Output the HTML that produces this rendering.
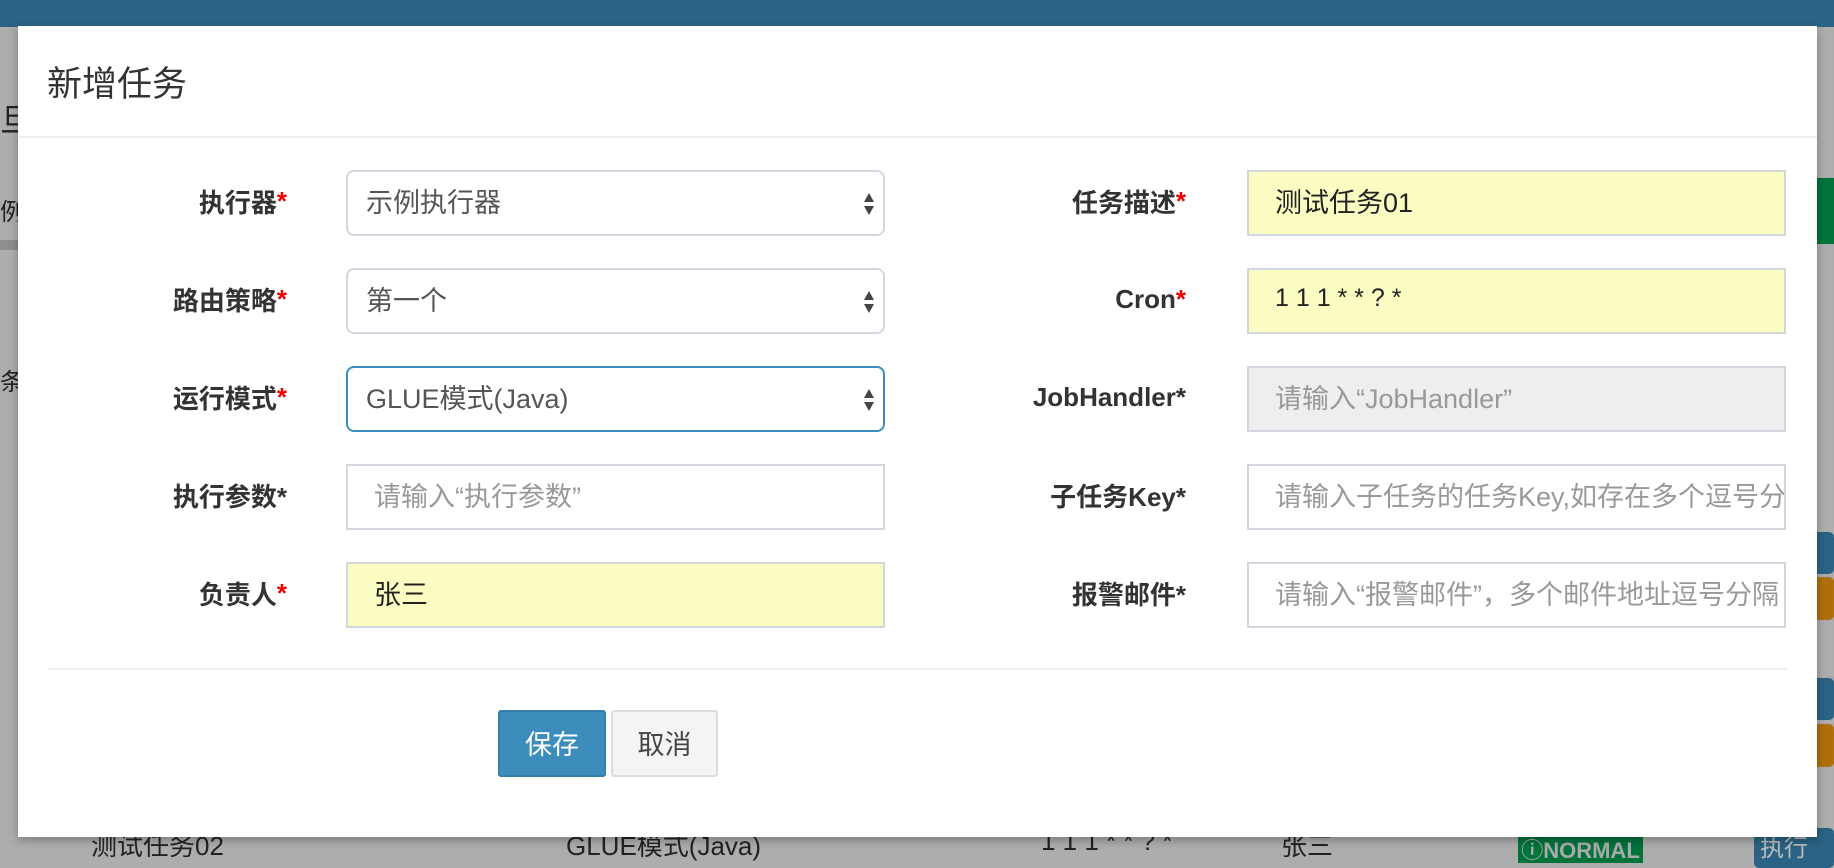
<!DOCTYPE html>
<html><head><meta charset="utf-8"><style>
*{box-sizing:border-box;margin:0;padding:0}
body{width:1834px;height:860px;overflow:hidden;background:#adadad;position:relative;font-family:"Liberation Sans","Noto Sans CJK SC",sans-serif;color:#333}
.top{position:absolute;left:0;top:0;width:1834px;height:27px;background:#2b6385}
.bg{position:absolute;font-size:24px;color:#222}
.modal{position:absolute;left:18px;top:26px;width:1799px;height:811px;background:#fff;box-shadow:0 3px 9px rgba(0,0,0,.3)}
.title{position:absolute;left:29px;top:34px;font-size:35px;line-height:50px;color:#333}
.hsep{position:absolute;left:0;top:110px;width:1799px;height:2px;background:#f0f0f0}
.lbl{position:absolute;width:260px;height:62px;display:flex;align-items:center;justify-content:flex-end;font-size:26px;font-weight:bold;color:#333}
.lbl i{color:#e00;font-style:normal}
.inp{position:absolute;width:539px;height:66px;border:2px solid #d2d6de;font-size:27px;display:flex;align-items:center;padding-left:18px;padding-bottom:5px;white-space:nowrap;overflow:hidden;color:#555}
.sel{border-radius:8px;padding-left:18px}
.ph{color:#999;padding-left:26px}
.y{background:#fafcc2;color:#222;padding-left:26px}
.dis{background:#eee;color:#999;padding-left:26px}
.arr{position:absolute;right:8px;top:19px;width:12px;height:26px}
.fsep{position:absolute;left:30px;top:642px;width:1739px;height:2px;background:#eee}
.btn{position:absolute;top:684px;height:67px;font-size:27px;display:flex;align-items:center;justify-content:center;border-radius:3px;padding-bottom:3px}
</style></head><body>
<div class="top"></div>
<div class="bg" style="left:0;top:95px;font-size:32px">旦</div>
<div class="bg" style="left:0;top:192px">例</div>
<div style="position:absolute;left:0;top:240px;width:18px;height:10px;background:#8f8f8f"></div>
<div class="bg" style="left:0;top:362px">条</div>
<div style="position:absolute;left:1817px;top:178px;width:17px;height:66px;background:#00733b"></div>
<div style="position:absolute;left:1812px;top:532px;width:22px;height:42px;background:#2a6385;border-radius:5px"></div>
<div style="position:absolute;left:1812px;top:577px;width:22px;height:43px;background:#b06f0b;border-radius:5px"></div>
<div style="position:absolute;left:1812px;top:678px;width:22px;height:42px;background:#2a6385;border-radius:5px"></div>
<div style="position:absolute;left:1812px;top:724px;width:22px;height:43px;background:#b06f0b;border-radius:5px"></div>
<div class="bg" style="left:91px;top:826px;font-size:26px">测试任务02</div>
<div class="bg" style="left:566px;top:826px;font-size:26px">GLUE模式(Java)</div>
<div class="bg" style="left:1041px;top:826px;font-size:26px">1 1 1 * * ? *</div>
<div class="bg" style="left:1281px;top:826px;font-size:26px">张三</div>
<div style="position:absolute;left:1518px;top:833px;width:125px;height:30px;background:#00733b;color:#aaa;font-weight:bold;font-size:22px;text-align:center">ⓘNORMAL</div>
<div style="position:absolute;left:1754px;top:828px;width:80px;height:40px;background:#2a6385;border-radius:5px;color:#bbb;font-size:24px;padding-left:6px">执行</div>
<div class="modal">
<div class="title">新增任务</div>
<div class="hsep"></div>

<div class="lbl" style="left:9px;top:144px">执行器<i>*</i></div>
<div class="inp sel" style="left:328px;top:144px">示例执行器<svg class="arr" viewBox="0 0 12 26"><path d="M6 2L11 11H1z M6 24L11 15H1z" fill="#444"/></svg></div>
<div class="lbl" style="left:9px;top:242px">路由策略<i>*</i></div>
<div class="inp sel" style="left:328px;top:242px">第一个<svg class="arr" viewBox="0 0 12 26"><path d="M6 2L11 11H1z M6 24L11 15H1z" fill="#444"/></svg></div>
<div class="lbl" style="left:9px;top:340px">运行模式<i>*</i></div>
<div class="inp sel" style="left:328px;top:340px;border-color:#3c8dbc">GLUE模式(Java)<svg class="arr" viewBox="0 0 12 26"><path d="M6 2L11 11H1z M6 24L11 15H1z" fill="#444"/></svg></div>
<div class="lbl" style="left:9px;top:438px">执行参数*</div>
<div class="inp ph" style="left:328px;top:438px">请输入“执行参数”</div>
<div class="lbl" style="left:9px;top:536px">负责人<i>*</i></div>
<div class="inp y" style="left:328px;top:536px">张三</div>

<div class="lbl" style="left:908px;top:144px">任务描述<i>*</i></div>
<div class="inp y" style="left:1229px;top:144px">测试任务01</div>
<div class="lbl" style="left:908px;top:242px">Cron<i>*</i></div>
<div class="inp y" style="left:1229px;top:242px;font-size:25px">1 1 1 * * ? *</div>
<div class="lbl" style="left:908px;top:340px">JobHandler*</div>
<div class="inp dis" style="left:1229px;top:340px">请输入“JobHandler”</div>
<div class="lbl" style="left:908px;top:438px">子任务Key*</div>
<div class="inp ph" style="left:1229px;top:438px">请输入子任务的任务Key,如存在多个逗号分隔</div>
<div class="lbl" style="left:908px;top:536px">报警邮件*</div>
<div class="inp ph" style="left:1229px;top:536px">请输入“报警邮件”，多个邮件地址逗号分隔</div>

<div class="fsep"></div>
<div class="btn" style="left:480px;width:108px;background:#3c8dbc;border:2px solid #367fa9;color:#fff">保存</div>
<div class="btn" style="left:593px;width:107px;background:#f4f4f4;border:2px solid #ddd;color:#444">取消</div>
</div>
</body></html>
